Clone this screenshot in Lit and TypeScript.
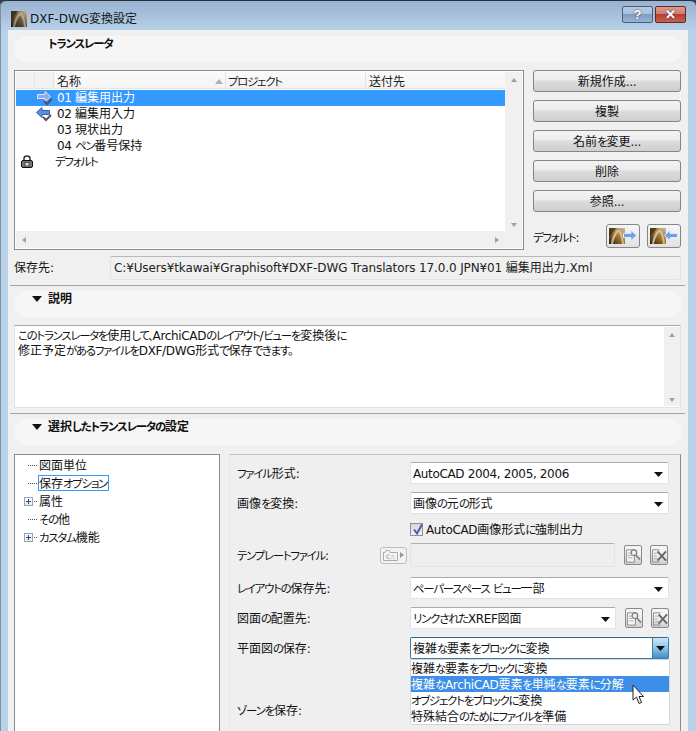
import { LitElement, html, css, svg } from "lit";
import { customElement } from "lit/decorators.js";

/* Meiryo UI has narrow kana and tight Latin: split runs so each gets its own metrics. */
const tx = (s: string) =>
  s.split(/([\u3040-\u30ff、。]+|[A-Za-z0-9 ,\/.:¥\-\\]+)/).filter(Boolean).map((p) => {
    if (/^[\u3040-\u30ff、。]/.test(p)) return html`<span class="k">${p}</span>`;
    if (/^[A-Za-z0-9 ,\/.:¥\-\\]/.test(p)) return html`<span class="l">${p}</span>`;
    return p;
  });

const logo = (s: number, id: string, dark: boolean) => html`<svg width=${s} height=${s} viewBox="0 0 16 16">
  <defs><linearGradient id=${id} x1="0" x2="1" y1="1" y2="0"><stop offset="0" stop-color="#211a10"/><stop offset=".55" stop-color=${dark ? "#6e5a3c" : "#a87a28"}/><stop offset="1" stop-color="#c8bda8"/></linearGradient></defs>
  <rect width="16" height="16" fill="url(#${id})"/>
  <path d="M2 16C3 8 6 2.5 10 1.5C12.5 2.5 14 8 15 16H13C12.5 10 11 6 9.5 4C7 6.5 5 11 4 16Z" fill="#d8ccb4" opacity=${dark ? ".55" : ".8"}/>
  <path d="M0 0H7L0 9Z" fill="#2b241a" opacity=".7"/>
</svg>`;

const arrowR = (c1: string, c2: string) => svg`<path d="M.5 3.5H8V.5L13.5 5.5L8 10.5V7.5H.5Z" fill=${c1} stroke=${c2} stroke-width="1"/>`;
const arrowL = (c1: string, c2: string) => svg`<path d="M13.5 3.5H6V.5L.5 5.5L6 10.5V7.5H13.5Z" fill=${c1} stroke=${c2} stroke-width="1"/>`;
const check = svg`<path d="M7 10L10 13L15 8" fill="none" stroke="#555" stroke-width="2"/>`;

const rowIcon = (dir: "r" | "l" | "") => {
  if (dir === "r") return html`<svg class="ri r1" width="16" height="15" viewBox="0 0 16 15">${arrowR("#8fa8ea", "#dfe6f8")}${check}</svg>`;
  if (dir === "l") return html`<svg class="ri" width="16" height="15" viewBox="0 0 16 15">${arrowL("#5f8fdc", "#2f5fb0")}${check}</svg>`;
  return "";
};

const lock = html`<svg width="12" height="13" viewBox="0 0 12 13"><path d="M3 6V3.5C3 2 4.2 1 6 1S9 2 9 3.5V6" fill="none" stroke="#333" stroke-width="1.5"/><rect x=".5" y="5.5" width="11" height="7" rx="1.5" fill="#777" stroke="#111"/><rect x="4" y="7.5" width="4" height="3.5" fill="#ddd" stroke="#222" stroke-width=".6"/></svg>`;

const findIcon = html`<svg width="17" height="17" viewBox="0 0 17 17"><path d="M1.5 2.5H10V15.5H1.5Z" fill="#f6f6f6" stroke="#888"/><path d="M3 6H7M3 8.5H7M3 11H8" stroke="#aaa"/><circle cx="9.5" cy="5.5" r="3" fill="#ececec" stroke="#777" stroke-width="1.2"/><path d="M11.5 8L16 13" stroke="#888" stroke-width="2"/></svg>`;
const xIcon = html`<svg width="17" height="17" viewBox="0 0 17 17"><path d="M1.5 2.5H9M1.5 2.5V15.5H9" fill="none" stroke="#888"/><path d="M3 6H7M3 9H6M3 12H7" stroke="#aaa"/><path d="M7 4L16 14M16 4L7 14" stroke="#666" stroke-width="2"/></svg>`;

const caret = html`<svg class="caret" width="9" height="5" viewBox="0 0 9 5"><path d="M0 0H9L4.5 5Z" fill="#111"/></svg>`;
const tri = html`<svg class="tri" width="10" height="6" viewBox="0 0 10 6"><path d="M0 0H10L5 6Z" fill="#111"/></svg>`;

@customElement("app-root")
export class AppRoot extends LitElement {
  static styles = css`
    :host {
      display: block; width: 696px; height: 731px; overflow: hidden; background: #39414b;
      font: 12px/16px "DejaVu Sans", "Noto Sans CJK JP", sans-serif;
      font-feature-settings: "palt"; color: #111;
    }
    * { box-sizing: border-box; }
    .k { font-size: 11.4px; letter-spacing: -1.2px; }
    .l { letter-spacing: -.35px; }
    .frame {
      height: 731px; border-top: 1px solid #2a3038; border-radius: 6px 6px 0 0; overflow: hidden;
      background: linear-gradient(#98b2d0 0, #b8d2ea 30px, #b8d2ea 100%);
      box-shadow: inset 1px 0 0 #7d8fa4;
    }
    .title { height: 29px; display: flex; align-items: center; padding: 6px 10px 0 11px; gap: 3px; }
    .title .name { flex: 1; color: #101820; }
    .title .name .l { letter-spacing: 0; }
    .wbtns { display: flex; gap: 2px; margin-top: -8px; }
    .wb { width: 31px; height: 17px; border: 1px solid #4d5f72; border-radius: 2px; display: flex; align-items: center; justify-content: center; font: bold 13px/15px "Liberation Sans", sans-serif; color: #fff; text-shadow: 0 0 2px #334; }
    .wb.help { background: linear-gradient(#b5cbe2 0, #a9c0da 48%, #7d9cc0 50%, #9ab6d4 100%); }
    .wb.close { background: linear-gradient(#dd9a90 0, #cf7a6e 48%, #b63f30 50%, #c9604f 100%); border-color: #5e2a26; }
    .client { margin: 0 8px; background: #f0f0f0; height: 701px; overflow: hidden; padding-top: 6px; }
    .pill { margin: 0 6px; height: 26px; border-radius: 13px; background: #f6f6f6; display: flex; padding: 0 0 0 18px; font-weight: 700; gap: 6px; line-height: 17px; }
    .pill .tri { margin-top: 5px; flex: none; }
    .pill.nt { padding-left: 34px; }
    .top { display: flex; margin: 8px 0 0 6px; gap: 9px; }
    .list { width: 510px; height: 180px; border: 1px solid #8c8c8c; background: #fff; padding: 1px; display: grid; grid-template: 1fr 17px / 1fr 17px; }
    .listmain { overflow: hidden; }
    .lh { display: flex; height: 17px; border-bottom: 1px solid #e4e4e4; background: linear-gradient(#fafafa, #f4f4f4); color: #222; }
    .lh > div { border-right: 1px solid #e4e4e4; padding-left: 3px; line-height: 21px; position: relative; }
    .c0, .c1 { width: 19px; background: #f2f2f2; }
    .c2 { width: 172px; }
    .lh > .c3 { width: 140px; padding-left: 2px; }
    .lh > .c4 { width: 139px; border-right: none; }
    .sort { position: absolute; right: 2px; top: 7px; width: 0; height: 0; border: 4px solid transparent; border-top: 0; border-bottom: 5px solid #b0b0b0; }
    .rows { margin-top: 1px; }
    .row { height: 16px; display: flex; align-items: center; line-height: 15px; }
    .row.sel { background: #3399ff; color: #fff; }
    .row .ic { width: 38px; height: 16px; position: relative; flex: none; }
    .ri { position: absolute; left: 20px; top: 1px; }
    .ri.r1 { left: 21px; }
    .lk { position: absolute; left: 5px; top: 1px; }
    .row .t { padding-left: 3px; }
    .row.def .t { padding-left: 1px; }
    .vs { background: #f0f0f0; display: flex; flex-direction: column; justify-content: space-between; align-items: center; padding: 6px 0 4px; }
    .hs { background: #f0f0f0; display: flex; justify-content: space-between; align-items: center; padding: 0 6px; }
    .corner { background: #f0f0f0; }
    .up, .dn, .lf, .rt { width: 0; height: 0; border: 3.5px solid transparent; }
    .up { border-top: 0; border-bottom: 4px solid #a0a0a0; }
    .dn { border-bottom: 0; border-top: 4px solid #a0a0a0; }
    .lf { border-left: 0; border-right: 4px solid #a0a0a0; }
    .rt { border-right: 0; border-left: 4px solid #a0a0a0; }
    .side { width: 148px; display: flex; flex-direction: column; gap: 8px; }
    .btn { height: 22px; border: 1px solid #858585; border-radius: 3px; background: linear-gradient(#f3f3f3 0, #ececec 45%, #dcdcdc 50%, #cfcfcf 100%); text-align: center; line-height: 22px; }
    .defrow { display: flex; align-items: center; margin-top: 4px; height: 24px; }
    .defrow .dl { width: 73px; margin-top: 3px; }
    .ibtn { width: 34px; height: 24px; border: 1px solid #858585; border-radius: 3px; background: linear-gradient(#f6f6f6, #e2e2e2); display: flex; align-items: center; position: relative; padding-left: 2px; margin-right: 7px; }
    .ibtn:last-child { margin-right: 0; }
    .ibtn svg.ar { position: absolute; right: 2px; top: 5px; }
    .path { display: flex; margin: 6px 0 0 6px; align-items: center; }
    .path .pl { width: 96px; }
    .path .pf { width: 571px; height: 24px; border: 1px solid #dfe3e8; border-top-color: #b8b8b8; border-radius: 2px; padding-left: 3px; line-height: 22px; white-space: nowrap; overflow: hidden; color: #222; }
    .pf .l { letter-spacing: -.12px; }
    .sep { height: 1px; background: #a2a2a2; margin: 5px 3px 5px 2px; }
    .desc { margin: 8px 0 0 6px; width: 667px; height: 83px; border: 1px solid #dfe3e8; border-top-color: #a8a8a8; background: #fff; display: flex; padding-left: 3px; }
    .desc .txt { flex: 1; padding-top: 3px; line-height: 15px; white-space: nowrap; overflow: hidden; }
    .desc .vs { width: 16px; margin: 1px 0; }
    .bottom { display: flex; margin: 9px 0 0 6px; gap: 9px; }
    .tree { width: 206px; height: 290px; border: 1px solid #8c8c8c; background: #fff; padding-top: 1px; }
    .ti { height: 18px; display: flex; align-items: center; position: relative; padding-left: 13px; }
    .ti::before { content: ""; width: 9px; border-top: 1px dotted #555; margin-right: 1px; flex: none; }
    .ti .lab { padding-right: 1px; border: 1px solid transparent; height: 16px; line-height: 16px; }
    .ti .lab.focus { border-color: #3399ff; }
    .plus { position: absolute; left: 9px; top: 5px; width: 9px; height: 9px; border: 1px solid #9aa4b4; background: linear-gradient(#fff, #e4e8f0); }
    .plus::before { content: ""; position: absolute; left: 1px; top: 3px; width: 5px; height: 1px; background: #2a4a8a; }
    .plus::after { content: ""; position: absolute; left: 3px; top: 1px; width: 1px; height: 5px; background: #2a4a8a; }
    .panel { width: 452px; height: 290px; border-top: 1px solid #c4c4c4; border-right: 1px solid #8c8c8c; border-left: 1px solid #e8e8e8; background: #efefef; padding: 7px 0 0 7px; display: flex; flex-direction: column; position: relative; }
    .fr { display: flex; align-items: center; height: 22px; margin-bottom: 8px; }
    .fr.tight { margin-bottom: 7px; }
    .fl { width: 173px; flex: none; padding-top: 2px; }
    .sel2 { width: 259px; height: 22px; background: #fff; border: 1px solid #dfe3e8; border-top-color: #aaa; border-radius: 2px; padding-left: 2px; line-height: 22px; position: relative; }
    .sel2.short { width: 206px; }
    .caret { position: absolute; right: 5px; top: 9px; }
    .chk { display: flex; align-items: center; margin: 0 0 7px 173px; height: 15px; gap: 3px; padding-top: 2px; }
    .box { width: 13px; height: 13px; border: 1px solid #909090; background: linear-gradient(#d8d8d8, #f0f0f0); position: relative; }
    .box svg { position: absolute; left: 1px; top: -1px; }
    .tpl { display: flex; align-items: center; height: 24px; margin-bottom: 10px; }
    .tpl .fl { width: 143px; }
    .cbtn { width: 27px; height: 17px; border: 1px solid #bdbdbd; border-radius: 3px; margin-right: 3px; display: flex; align-items: center; padding-left: 2px; gap: 2px; background: #f2f2f2; }
    .ctri { width: 0; height: 0; border: 3px solid transparent; border-right: 0; border-left: 4px solid #999; }
    .tf { width: 205px; height: 24px; border: 1px solid #dfe3e8; border-top-color: #b0b0b0; border-radius: 2px; background: #eee; }
    .tb { width: 18px; height: 20px; border: 1px solid #8a8a8a; border-radius: 2px; background: linear-gradient(#f4f4f4 40%, #cfcfcf); display: flex; align-items: center; justify-content: center; flex: none; }
    .tb.g1 { margin-left: 9px; }
    .tb.g2 { margin-left: 8px; }
    .sel2.open { border: 1px solid #3d7ba8; border-top-color: #2e6a96; }
    .dbtn { position: absolute; right: 0; top: 0; bottom: 0; width: 16px; background: linear-gradient(#cfe6f6, #90c4e6 50%, #3f8cc4); border-left: 1px solid #3d7ba8; }
    .dbtn .caret { right: 3px; top: 8px; }
    .menu { position: absolute; left: 180px; top: 204px; width: 260px; height: 66px; background: #fff; border: 1px solid #cfd6de; border-radius: 0 0 2px 2px; }
    .mi { height: 16px; line-height: 18px; white-space: nowrap; }
    .mi.on { background: #3d8ee8; color: #fff; }
    .cursor { position: absolute; left: 402px; top: 229px; }
    .zone { margin-top: 32px; }
  `;

  render() {
    const rows: [string, "r" | "l" | "", boolean][] = [
      ["01 編集用出力", "r", true],
      ["02 編集用入力", "l", false],
      ["03 現状出力", "", false],
      ["04 ペン番号保持", "", false],
    ];
    const tree: [string, boolean, boolean][] = [
      ["図面単位", false, false],
      ["保存オプション", false, true],
      ["属性", true, false],
      ["その他", false, false],
      ["カスタム機能", true, false],
    ];
    return html`
      <div class="frame">
        <div class="title">
          ${logo(16, "g0", true)}
          <div class="name">${tx("DXF-DWG変換設定")}</div>
          <div class="wbtns"><div class="wb help">?</div><div class="wb close">✕</div></div>
        </div>
        <div class="client">
          <div class="pill nt"><span>${tx("トランスレータ")}</span></div>
          <div class="top">
            <div class="list">
              <div class="listmain">
                <div class="lh">
                  <div class="c0"></div><div class="c1"></div>
                  <div class="c2">${tx("名称")}<span class="sort"></span></div>
                  <div class="c3">${tx("プロジェクト")}</div><div class="c4">${tx("送付先")}</div>
                </div>
                <div class="rows">
                  ${rows.map(([t, ic, sel]) => html`<div class="row ${sel ? "sel" : ""}"><div class="ic">${rowIcon(ic)}</div><div class="t">${tx(t)}</div></div>`)}
                  <div class="row def"><div class="ic"><span class="lk">${lock}</span></div><div class="t">${tx("デフォルト")}</div></div>
                </div>
              </div>
              <div class="vs"><div class="up"></div><div class="dn"></div></div>
              <div class="hs"><div class="lf"></div><div class="rt"></div></div>
              <div class="corner"></div>
            </div>
            <div class="side">
              ${["新規作成...", "複製", "名前を変更...", "削除", "参照..."].map((b) => html`<div class="btn">${tx(b)}</div>`)}
              <div class="defrow">
                <div class="dl">${tx("デフォルト:")}</div>
                <div class="ibtn">${logo(16, "g1", false)}<svg class="ar" width="14" height="11" viewBox="0 0 14 11">${arrowR("#6f9fe8", "#dfe9fa")}</svg></div>
                <div class="ibtn">${logo(16, "g2", false)}<svg class="ar" width="14" height="11" viewBox="0 0 14 11">${arrowL("#6f9fe8", "#dfe9fa")}</svg></div>
              </div>
            </div>
          </div>
          <div class="path">
            <div class="pl">${tx("保存先:")}</div>
            <div class="pf">${tx("C:¥Users¥tkawai¥Graphisoft¥DXF-DWG Translators 17.0.0 JPN¥01 編集用出力.Xml")}</div>
          </div>
          <div class="sep"></div>
          <div class="pill">${tri}<span>${tx("説明")}</span></div>
          <div class="desc">
            <div class="txt">${tx("このトランスレータを使用して、ArchiCADのレイアウト/ビューを変換後に")}<br />${tx("修正予定があるファイルをDXF/DWG形式で保存できます。")}</div>
            <div class="vs"><div class="up"></div><div class="dn"></div></div>
          </div>
          <div class="sep"></div>
          <div class="pill">${tri}<span>${tx("選択したトランスレータの設定")}</span></div>
          <div class="bottom">
            <div class="tree">
              ${tree.map(([t, plus, focus]) => html`<div class="ti">${plus ? html`<span class="plus"></span>` : ""}<span class="lab ${focus ? "focus" : ""}">${tx(t)}</span></div>`)}
            </div>
            <div class="panel">
              <div class="fr"><div class="fl">${tx("ファイル形式:")}</div><div class="sel2">${tx("AutoCAD 2004, 2005, 2006")}${caret}</div></div>
              <div class="fr tight"><div class="fl">${tx("画像を変換:")}</div><div class="sel2">${tx("画像の元の形式")}${caret}</div></div>
              <div class="chk"><div class="box"><svg width="12" height="13" viewBox="0 0 12 13"><path d="M2 6.5L5 10.5L10 1.5" fill="none" stroke="#4a5aa8" stroke-width="2"/></svg></div><span>${tx("AutoCAD画像形式に強制出力")}</span></div>
              <div class="tpl">
                <div class="fl">${tx("テンプレートファイル:")}</div>
                <div class="cbtn"><svg width="15" height="11" viewBox="0 0 15 11"><path d="M.5 2.5H2L3 .5H6L7 2.5H14.5V10.5H.5Z" fill="#f4f4f4" stroke="#aaa"/><text x="3" y="9" font-size="6" fill="#888" font-family="DejaVu Sans">C:\\</text></svg><span class="ctri"></span></div>
                <div class="tf"></div>
                <div class="tb g1">${findIcon}</div><div class="tb g2">${xIcon}</div>
              </div>
              <div class="fr"><div class="fl">${tx("レイアウトの保存先:")}</div><div class="sel2">${tx("ペーパースペース ビュー一部")}${caret}</div></div>
              <div class="fr"><div class="fl">${tx("図面の配置先:")}</div><div class="sel2 short">${tx("リンクされたXREF図面")}${caret}</div><div class="tb g1">${findIcon}</div><div class="tb g2">${xIcon}</div></div>
              <div class="fr"><div class="fl">${tx("平面図の保存:")}</div><div class="sel2 open">${tx("複雑な要素をブロックに変換")}<div class="dbtn">${caret}</div></div></div>
              <div class="fr zone"><div class="fl">${tx("ゾーンを保存:")}</div></div>
              <div class="menu">
                <div class="mi">${tx("複雑な要素をブロックに変換")}</div>
                <div class="mi on">${tx("複雑なArchiCAD要素を単純な要素に分解")}</div>
                <div class="mi">${tx("オブジェクトをブロックに変換")}</div>
                <div class="mi">${tx("特殊結合のためにファイルを準備")}</div>
              </div>
              <svg class="cursor" width="13" height="21" viewBox="0 0 13 21"><path d="M1 1V16L4.5 13L7 19.5L9.5 18.5L7 12.5H11.5Z" fill="#fff" stroke="#222"/></svg>
            </div>
          </div>
        </div>
      </div>
    `;
  }
}
